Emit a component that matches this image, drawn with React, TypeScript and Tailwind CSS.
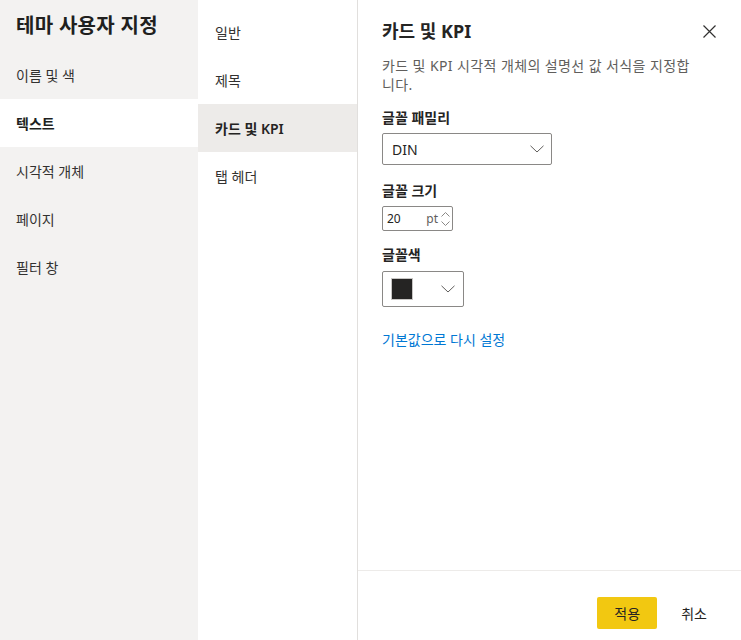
import { useState } from "react";

const themeSections = ["이름 및 색", "텍스트", "시각적 개체", "페이지", "필터 창"];
const textSections = ["일반", "제목", "카드 및 KPI", "탭 헤더"];

function Chevron({ className }: { className?: string }) {
  return (
    <svg className={className} width="14" height="8" viewBox="0 0 14 8" fill="none">
      <path d="M0.5 0.8 L7 7 L13.5 0.8" stroke="#605e5c" strokeWidth="1" />
    </svg>
  );
}

export default function App() {
  const [section, setSection] = useState("텍스트");
  const [sub, setSub] = useState("카드 및 KPI");
  const [size, setSize] = useState(20);

  return (
    <div className="flex h-[640px] w-[741px] bg-white text-[#252423] font-['Noto_Sans','Noto_Sans_CJK_KR',sans-serif]">
      {/* left nav */}
      <div className="w-[198px] shrink-0 bg-[#f3f2f1]">
        <h1 className="px-4 pt-[12px] h-[51px] text-[20px] leading-[28px] font-bold tracking-[0.3px] text-[#201f1e]">
          테마 사용자 지정
        </h1>
        {themeSections.map((s) => (
          <div
            key={s}
            onClick={() => setSection(s)}
            className={
              s === section
                ? "flex h-12 items-center px-4 text-[14px] font-semibold bg-white text-[#201f1e]"
                : "flex h-12 items-center px-4 text-[14px] text-[#323130] cursor-pointer"
            }
          >
            {s}
          </div>
        ))}
      </div>

      {/* sub nav */}
      <div className="w-[160px] shrink-0 border-r border-[#e1dfdd] pt-2">
        {textSections.map((s) => (
          <div
            key={s}
            onClick={() => setSub(s)}
            className={
              s === sub
                ? "flex h-12 items-center pl-[17px] text-[14px] font-semibold bg-[#edebe9] text-[#252423]"
                : "flex h-12 items-center pl-[17px] text-[14px] text-[#323130] cursor-pointer"
            }
          >
            {s}
          </div>
        ))}
      </div>

      {/* detail pane */}
      <div className="flex flex-1 flex-col">
        <div className="flex-1 px-6">
          <div className="flex items-center justify-between pt-[12px] h-[50px]">
            <h2 className="text-[18px] leading-6 font-bold text-[#252423]">카드 및 KPI</h2>
            <button className="-mr-[3px] p-1">
              <svg width="13" height="13" viewBox="0 0 13 13" fill="none">
                <path d="M0.5 0.5 L12.5 12.5 M12.5 0.5 L0.5 12.5" stroke="#323130" strokeWidth="1.2" />
              </svg>
            </button>
          </div>

          <p className="mt-[6px] w-[314px] text-[14px] leading-[19px] tracking-[0.4px] text-[#605e5c]">
            카드 및 KPI 시각적 개체의 설명선 값 서식을 지정합니다.
          </p>

          <label className="mt-[14px] block text-[14px] leading-5 font-semibold">글꼴 패밀리</label>
          <div className="mt-[5px] flex h-[32px] w-[170px] items-center justify-between rounded-[2px] border border-[#8a8886] pl-[9px] pr-[7px] text-[14px]">
            <span>DIN</span>
            <Chevron />
          </div>

          <label className="mt-[16px] block text-[14px] leading-5 font-semibold">글꼴 크기</label>
          <div className="mt-[5px] flex h-[25px] w-[71px] items-center rounded-[2px] border border-[#8a8886] pl-[4px] pr-[2px] text-[12px]">
            <input
              value={size}
              onChange={(e) => setSize(Number(e.target.value) || 0)}
              className="w-[30px] bg-transparent outline-none"
            />
            <span className="ml-auto text-[#605e5c]">pt</span>
            <div className="ml-[3px] flex flex-col gap-[4px]">
              <svg width="9" height="5" viewBox="0 0 9 5" fill="none">
                <path d="M0.5 4.5 L4.5 0.5 L8.5 4.5" stroke="#8a8886" strokeWidth="1" />
              </svg>
              <svg width="9" height="5" viewBox="0 0 9 5" fill="none">
                <path d="M0.5 0.5 L4.5 4.5 L8.5 0.5" stroke="#8a8886" strokeWidth="1" />
              </svg>
            </div>
          </div>

          <label className="mt-[14px] block text-[14px] leading-5 font-semibold">글꼴색</label>
          <div className="mt-[6px] flex h-[36px] w-[82px] items-center rounded-[2px] border border-[#8a8886] pl-[8px]">
            <div className="h-[22px] w-[22px] border border-[#c8c6c4] bg-[#252423]" />
            <Chevron className="ml-[28px]" />
          </div>

          <a className="mt-[23px] block w-fit text-[14px] leading-5 text-[#0078d4] cursor-pointer">
            기본값으로 다시 설정
          </a>
        </div>

        <div className="flex h-[70px] items-start justify-end gap-[24px] border-t border-[#edebe9] pr-[34px] pt-[26px]">
          <button className="h-[32px] w-[60px] rounded-[2px] bg-[#f2c811] text-[14px] text-[#252423]">적용</button>
          <button className="h-[32px] text-[14px] text-[#252423]">취소</button>
        </div>
      </div>
    </div>
  );
}
